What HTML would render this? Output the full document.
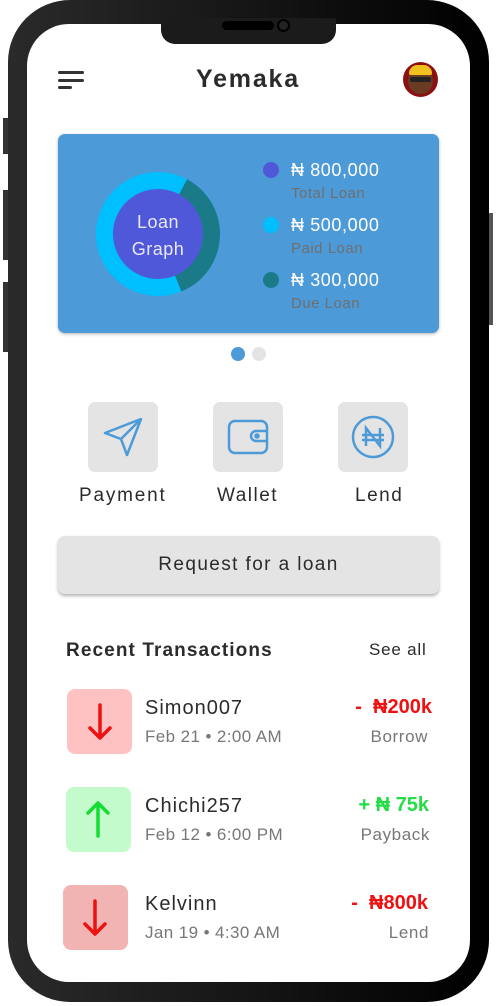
<!DOCTYPE html>
<html><head><style>
*{margin:0;padding:0;box-sizing:border-box}
body{width:496px;height:1006px;background:#fff;position:relative;overflow:hidden;font-family:"Liberation Sans",sans-serif;color:#333}
.abs{position:absolute}
.frame{left:8px;top:0;width:481px;height:1002px;border-radius:62px;background:linear-gradient(90deg,#2a2a2a,#111 60%,#000)}
.screen{left:27px;top:24px;width:443px;height:958px;border-radius:42px;background:#fff}
.notch{left:161px;top:18px;width:175px;height:26px;background:#1b1b1b;border-radius:0 0 14px 14px}
.btn{background:#333;width:6px}
.t{position:absolute;white-space:nowrap}
.card{left:58px;top:134px;width:381px;height:199px;background:#4d9ad8;border-radius:7px;box-shadow:0 1px 3px rgba(0,0,0,.3)}
.dot{width:16px;height:16px;border-radius:50%}
.amt{color:#fff;font-size:18px;letter-spacing:.6px}
.lbl{color:#6f6f6f;font-size:15px;letter-spacing:.5px}
.ib{width:70px;height:70px;background:#e4e4e4;border-radius:7px}
.tx{width:65px;height:65px;border-radius:8px}
.name{font-size:20px;color:#2b2b2b;letter-spacing:1px}
.date{font-size:17px;color:#777;letter-spacing:.4px}
</style></head><body>
<div class="abs btn" style="left:3px;top:118px;height:36px"></div>
<div class="abs btn" style="left:3px;top:190px;height:70px"></div>
<div class="abs btn" style="left:3px;top:282px;height:70px"></div>
<div class="abs btn" style="left:488px;top:213px;width:5px;height:112px;background:#555"></div>
<div class="abs frame"></div>
<div class="abs screen"></div>
<div class="abs notch"></div>
<div class="abs" style="left:222px;top:21px;width:52px;height:9px;background:#000;border-radius:5px"></div>
<div class="abs" style="left:277px;top:19px;width:13px;height:13px;border:2px solid #000;border-radius:50%;background:#222"></div>

<div class="abs" style="left:58px;top:71px;width:26px;height:3px;background:#333;border-radius:2px"></div>
<div class="abs" style="left:58px;top:79px;width:26px;height:3px;background:#333;border-radius:2px"></div>
<div class="abs" style="left:58px;top:86px;width:14px;height:3px;background:#333;border-radius:2px"></div>
<div class="t" style="left:196px;top:65px;font-size:25px;font-weight:bold;color:#2b2b2b;letter-spacing:1.8px">Yemaka</div>
<div class="abs" style="left:403px;top:62px;width:35px;height:35px;border-radius:50%;background:#8b1010"></div>
<div class="abs" style="left:408px;top:68px;width:25px;height:26px;border-radius:50%;background:#6b3a22"></div>
<div class="abs" style="left:409px;top:65px;width:23px;height:10px;border-radius:10px 10px 2px 2px;background:#f0c020"></div>
<div class="abs" style="left:410px;top:77px;width:21px;height:5px;background:#222;border-radius:2px"></div>

<div class="abs card"></div>
<svg class="abs" style="left:95px;top:171px" width="126" height="126" viewBox="0 0 126 126">
<circle cx="63" cy="63" r="53" fill="none" stroke="#00bfff" stroke-width="18"/>
<circle cx="63" cy="63" r="53" fill="none" stroke="#1a7a88" stroke-width="18" stroke-dasharray="120 400" transform="rotate(-62 63 63)"/>
<circle cx="63" cy="63" r="45" fill="#4f58d8"/>
<text x="63" y="57" text-anchor="middle" font-family="Liberation Sans" font-size="18" fill="#e8e8ff" letter-spacing="0.5">Loan</text>
<text x="63" y="84" text-anchor="middle" font-family="Liberation Sans" font-size="18" fill="#e8e8ff" letter-spacing="0.5">Graph</text>
</svg>
<div class="abs dot" style="left:263px;top:162px;background:#4f58d8"></div>
<div class="t amt" style="left:291px;top:160px">₦ 800,000</div>
<div class="t lbl" style="left:291px;top:185px">Total Loan</div>
<div class="abs dot" style="left:263px;top:217px;background:#00bfff"></div>
<div class="t amt" style="left:291px;top:215px">₦ 500,000</div>
<div class="t lbl" style="left:291px;top:240px">Paid Loan</div>
<div class="abs dot" style="left:263px;top:272px;background:#1a7a88"></div>
<div class="t amt" style="left:291px;top:270px">₦ 300,000</div>
<div class="t lbl" style="left:291px;top:295px">Due Loan</div>

<div class="abs" style="left:231px;top:347px;width:14px;height:14px;border-radius:50%;background:#4d9ad8"></div>
<div class="abs" style="left:252px;top:347px;width:14px;height:14px;border-radius:50%;background:#e4e4e4"></div>

<div class="abs ib" style="left:88px;top:402px"></div>
<svg class="abs" style="left:101px;top:415px" width="44" height="44" viewBox="0 0 44 44" fill="none" stroke="#4d9ad8" stroke-width="2.5" stroke-linejoin="round"><path d="M40 4 L4 18 L20 24 L26 40 Z M40 4 L20 24"/></svg>
<div class="abs ib" style="left:213px;top:402px"></div>
<svg class="abs" style="left:226px;top:417px" width="44" height="40" viewBox="0 0 44 40" fill="none" stroke="#4d9ad8" stroke-width="2.5"><rect x="3" y="4" width="38" height="32" rx="6"/><path d="M41 14 H30 a5 5 0 0 0 0 10 H41"/><circle cx="31" cy="19" r="1.5" fill="#4d9ad8"/></svg>
<div class="abs ib" style="left:338px;top:402px"></div>
<svg class="abs" style="left:351px;top:415px" width="44" height="44" viewBox="0 0 44 44" fill="none" stroke="#4d9ad8" stroke-width="2.5"><circle cx="22" cy="22" r="20"/><path d="M15 31 V13 L29 31 V13 M11 20 H33 M11 25 H33"/></svg>
<div class="t" style="left:79px;top:485px;font-size:19px;color:#2b2b2b;letter-spacing:1.8px">Payment</div>
<div class="t" style="left:217px;top:485px;font-size:19px;color:#2b2b2b;letter-spacing:1.5px">Wallet</div>
<div class="t" style="left:355px;top:485px;font-size:19px;color:#2b2b2b;letter-spacing:1.5px">Lend</div>

<div class="abs" style="left:58px;top:536px;width:381px;height:58px;background:#e4e4e4;border-radius:7px;box-shadow:0 2px 3px rgba(0,0,0,.3)"></div>
<div class="t" style="left:58px;top:554px;width:381px;text-align:center;font-size:19px;color:#2b2b2b;letter-spacing:1.4px">Request for a loan</div>

<div class="t" style="left:66px;top:640px;font-size:19px;font-weight:bold;color:#2b2b2b;letter-spacing:1.1px">Recent Transactions</div>
<div class="t" style="left:369px;top:640px;font-size:17px;color:#2b2b2b;letter-spacing:.8px">See all</div>

<div class="abs tx" style="left:67px;top:689px;background:#ffc2c2"></div>
<svg class="abs" style="left:87px;top:702px" width="26" height="40" viewBox="0 0 26 40" fill="none" stroke="#ee1111" stroke-width="3.5" stroke-linecap="round" stroke-linejoin="round"><path d="M13 3 V36 M3 26 L13 36 L23 26"/></svg>
<div class="t name" style="left:145px;top:697px">Simon007</div>
<div class="t date" style="left:145px;top:727px">Feb 21 • 2:00 AM</div>
<div class="t" style="right:64px;top:696px;font-size:20px;font-weight:bold;color:#ee1111">-&nbsp; ₦200k</div>
<div class="t" style="right:68px;top:727px;font-size:17px;color:#777;letter-spacing:.6px">Borrow</div>

<div class="abs tx" style="left:66px;top:787px;background:#c4fbcc"></div>
<svg class="abs" style="left:85px;top:799px" width="26" height="40" viewBox="0 0 26 40" fill="none" stroke="#11dd33" stroke-width="3.5" stroke-linecap="round" stroke-linejoin="round"><path d="M13 37 V4 M3 14 L13 4 L23 14"/></svg>
<div class="t name" style="left:145px;top:795px">Chichi257</div>
<div class="t date" style="left:145px;top:825px">Feb 12 • 6:00 PM</div>
<div class="t" style="right:67px;top:794px;font-size:20px;font-weight:bold;color:#22dd44">+ ₦ 75k</div>
<div class="t" style="right:66px;top:825px;font-size:17px;color:#777;letter-spacing:.6px">Payback</div>

<div class="abs tx" style="left:63px;top:885px;background:#f2b3b3"></div>
<svg class="abs" style="left:82px;top:898px" width="26" height="40" viewBox="0 0 26 40" fill="none" stroke="#ee1111" stroke-width="3.5" stroke-linecap="round" stroke-linejoin="round"><path d="M13 3 V36 M3 26 L13 36 L23 26"/></svg>
<div class="t name" style="left:145px;top:893px">Kelvinn</div>
<div class="t date" style="left:145px;top:923px">Jan 19 • 4:30 AM</div>
<div class="t" style="right:68px;top:892px;font-size:20px;font-weight:bold;color:#ee1111">-&nbsp; ₦800k</div>
<div class="t" style="right:67px;top:923px;font-size:17px;color:#777;letter-spacing:.6px">Lend</div>
</body></html>
